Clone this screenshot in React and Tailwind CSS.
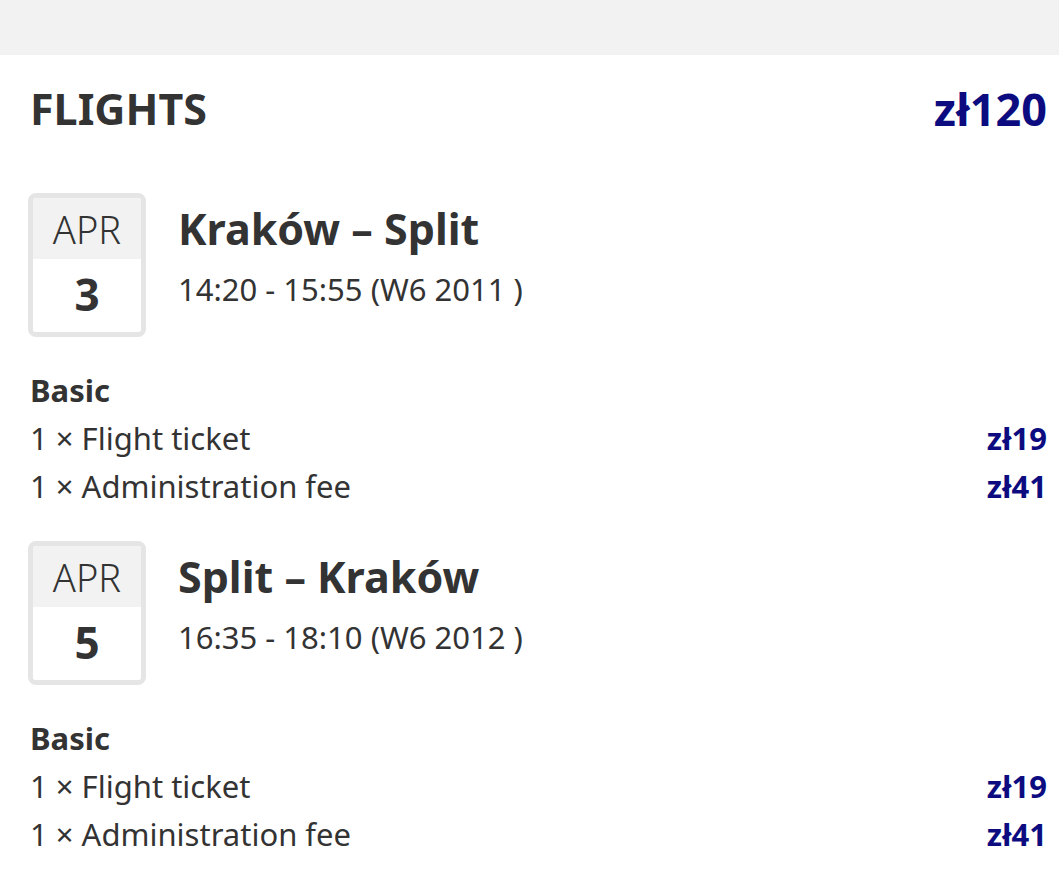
const FLIGHTS = [
  {
    month: 'APR', day: '3', route: 'Kraków – Split', time: '14:20 - 15:55 (W6 2011 )',
    fare: 'Basic',
    items: [
      { label: '1 × Flight ticket', price: 'zł19' },
      { label: '1 × Administration fee', price: 'zł41' },
    ],
  },
  {
    month: 'APR', day: '5', route: 'Split – Kraków', time: '16:35 - 18:10 (W6 2012 )',
    fare: 'Basic',
    items: [
      { label: '1 × Flight ticket', price: 'zł19' },
      { label: '1 × Administration fee', price: 'zł41' },
    ],
  },
];

function DateBox({ month, day }) {
  return (
    <div className="w-[118px] h-[144px] shrink-0 border-[5px] border-[#e5e5e5] rounded-[8px] overflow-hidden flex flex-col">
      <div className="h-[61px] bg-[#f2f2f2] flex items-center justify-center text-[38px] font-light leading-none">{month}</div>
      <div className="flex-1 bg-white flex items-center justify-center text-[44px] font-bold leading-none pb-[4px]">{day}</div>
    </div>
  );
}

function Flight({ f }) {
  return (
    <div>
      <div className="flex gap-[32px] ml-[-2px]">
        <DateBox month={f.month} day={f.day} />
        <div className="pt-[10px]">
          <div className="text-[43px] font-bold leading-[52px]">{f.route}</div>
          <div className="text-[31px] leading-[42px] mt-[13px]">{f.time}</div>
        </div>
      </div>
      <div className="mt-[29px]">
        <div className="text-[31px] font-bold leading-[48px]">{f.fare}</div>
        {f.items.map(it => (
          <div key={it.label} className="flex justify-between text-[31px] leading-[48px]">
            <span>{it.label}</span>
            <span className="font-bold text-[#0c0c80]">{it.price}</span>
          </div>
        ))}
      </div>
    </div>
  );
}

export default function App() {
  return (
    <div className="min-h-screen bg-white text-[#333333]" style={{ fontFamily: '"Noto Sans", sans-serif' }}>
      <div className="h-[55px] bg-[#f2f2f2]" />
      <div className="pl-[30px] pr-[12px]">
        <div className="flex justify-between items-center h-[108px]">
          <span className="text-[43px] font-bold">FLIGHTS</span>
          <span className="text-[45px] font-bold text-[#0c0c80]">zł120</span>
        </div>
        <div className="flex flex-col gap-[31px] pt-[30px]">
          {FLIGHTS.map(f => <Flight key={f.route} f={f} />)}
        </div>
      </div>
    </div>
  );
}
